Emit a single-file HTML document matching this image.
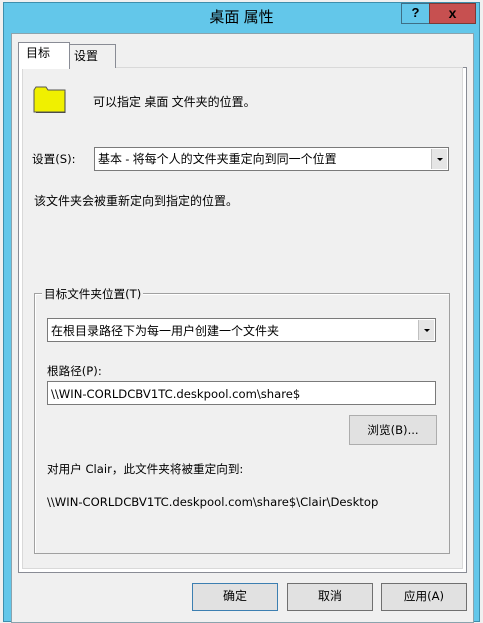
<!DOCTYPE html>
<html><head><meta charset="utf-8"><style>
*{margin:0;padding:0;box-sizing:border-box}
body{width:483px;height:619px;overflow:hidden;background:#f0f0f0;position:relative;font-family:"Liberation Sans","Noto Sans CJK SC",sans-serif;font-size:12px;color:#000}
.a{position:absolute}
.t{position:absolute;white-space:nowrap;line-height:14px}
.p{font-family:"DejaVu Sans","Noto Sans CJK SC",sans-serif;font-size:11.6px}
.combo{position:absolute;background:#fff;border:1px solid #7a7a7a}
.dd{position:absolute;right:1px;top:1px;bottom:1px;width:16px;background:#e5e5e5;border-left:1px solid #c0c0c0}
.dd:after{content:"";position:absolute;left:5px;top:9px;border-left:3px solid transparent;border-right:3px solid transparent;border-top:3px solid #000}
.btn{position:absolute;background:#e1e1e1;border:1px solid #adadad;text-align:center;line-height:25px}
</style></head><body>
<div class="a" style="left:3px;top:2px;width:477px;height:620px;background:#63c7ea;border:1px solid #3e8fad"></div>
<div class="t" style="left:0;width:483px;text-align:center;top:9px;font-size:15px;line-height:17px">桌面 属性</div>
<div class="a" style="left:401px;top:3px;width:29px;height:21px;border:1px solid #3e6f86;background:#63c7ea;text-align:center;font-weight:bold;font-size:13px;line-height:18px">?</div>
<div class="a" style="left:429px;top:3px;width:47px;height:21px;border:1px solid #7a3a36;background:#c75050;text-align:center;font-weight:bold;font-size:14px;line-height:18px">x</div>
<div class="a" style="left:11px;top:33px;width:463px;height:590px;background:#f0f0f0;border:1px solid #8ba3ad"></div>
<div class="a" style="left:18px;top:67px;width:449px;height:506px;border:1px solid #898c95;background:#fff"></div>
<div class="a" style="left:22px;top:67px;width:441px;height:502px;background:#f0f0f0;border:1px solid #d9d9d9"></div>
<div class="a" style="left:69px;top:44px;width:47px;height:24px;border:1px solid #898c95;border-bottom:none;background:#f0f0f0"></div>
<div class="t" style="left:74px;top:49px">设置</div>
<div class="a" style="left:18px;top:42px;width:52px;height:27px;border:1px solid #898c95;border-bottom:none;background:#fff"></div>
<div class="t" style="left:26px;top:46px">目标</div>
<svg class="a" style="left:33px;top:86px" width="34" height="27"><path d="M1 26V4l2-3h10l2 3h17v22z" fill="#f0f000" stroke="#555"/><path d="M32 6v21H3" stroke="#444" fill="none" stroke-width="1"/></svg>
<div class="t" style="left:93px;top:95px">可以指定 桌面 文件夹的位置。</div>
<div class="t p" style="left:32px;top:152px">设置(S):</div>
<div class="combo" style="left:94px;top:147px;width:355px;height:24px"><div class="t" style="left:3px;top:4px">基本 - 将每个人的文件夹重定向到同一个位置</div><div class="dd"></div></div>
<div class="t" style="left:34px;top:194px">该文件夹会被重新定向到指定的位置。</div>
<div class="a" style="left:34px;top:293px;width:416px;height:261px;border:1px solid #a0a0a0;box-shadow:inset 1px 1px 0 #fff"></div>
<div class="t p" style="left:42px;top:287px;background:#f0f0f0;padding:0 2px">目标文件夹位置(T)</div>
<div class="combo" style="left:47px;top:318px;width:389px;height:24px"><div class="t" style="left:3px;top:5px">在根目录路径下为每一用户创建一个文件夹</div><div class="dd"></div></div>
<div class="t p" style="left:47px;top:364px">根路径(P):</div>
<div class="combo" style="left:47px;top:381px;width:389px;height:24px"><div class="t p" style="left:3px;top:5px">\\WIN-CORLDCBV1TC.deskpool.com\share$</div></div>
<div class="btn p" style="left:349px;top:415px;width:88px;height:30px;line-height:28px">浏览(B)...</div>
<div class="t p" style="left:47px;top:462px">对用户 Clair，此文件夹将被重定向到:</div>
<div class="t p" style="left:47px;top:495px">\\WIN-CORLDCBV1TC.deskpool.com\share$\Clair\Desktop</div>
<div class="btn" style="left:192px;top:583px;width:86px;height:28px;border-color:#3c7fb1">确定</div>
<div class="btn" style="left:287px;top:583px;width:86px;height:28px;border-color:#707070">取消</div>
<div class="btn p" style="left:381px;top:583px;width:86px;height:28px;border-color:#707070">应用(A)</div>
</body></html>
